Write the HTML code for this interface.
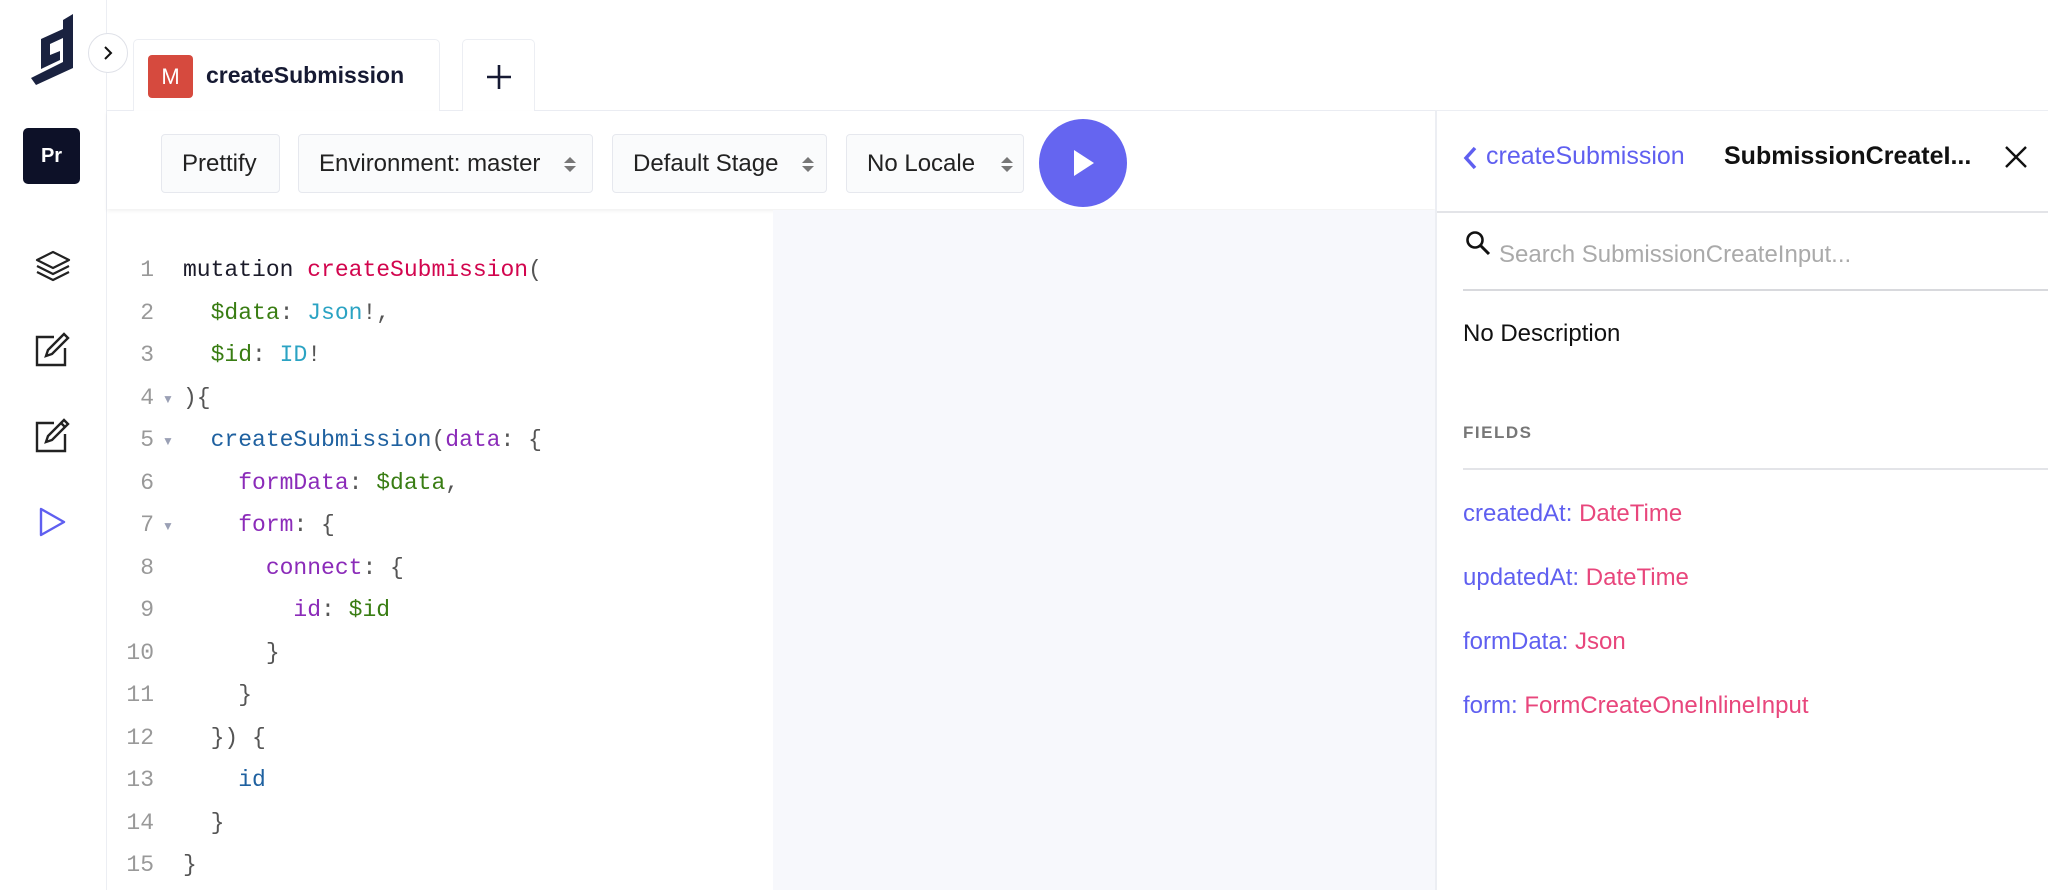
<!DOCTYPE html>
<html><head><meta charset="utf-8"><style>
*{box-sizing:border-box;margin:0;padding:0}
body{width:2048px;height:890px;overflow:hidden;background:#fff;font-family:"Liberation Sans",Arial,sans-serif;position:relative;color:#111}
.abs{position:absolute}
.side{left:0;top:0;width:107px;height:890px;border-right:1px solid #eceef3;background:#fff}
.btn{position:absolute;top:134px;height:59px;border:1px solid #e6e8ee;border-radius:4px;background:#fafbfc;font-size:24px;color:#222;display:flex;align-items:center;padding-left:20px}
.arr{position:absolute;right:20px;top:22px;width:0;height:0}
.arr:before{content:"";position:absolute;left:0;top:0;border-left:6px solid transparent;border-right:6px solid transparent;border-bottom:6px solid #777}
.arr:after{content:"";position:absolute;left:0;top:9px;border-left:6px solid transparent;border-right:6px solid transparent;border-top:6px solid #777}
.code{font-family:"Liberation Mono","DejaVu Sans Mono",monospace;font-size:23px;white-space:pre}
.ln{position:absolute;right:1894px;width:60px;text-align:right;color:#999}
.cl{position:absolute;left:183px;color:#555}
.k{color:#1b1b2a}.d{color:#d2054e}.v{color:#397d13}.t{color:#2ba3c3}.p{color:#8b2bb9}.f{color:#1f61a0}
.fold{position:absolute;left:162px;color:#9aa0b5;font-size:12px}
.rp{font-size:24px}
.fld{position:absolute;left:1463px;font-size:24px;color:#5f5ff0}
.fld span{color:#e8467c}
</style></head><body>
<div class="abs side"></div>
<!-- logo -->
<svg class="abs" style="left:0;top:0" width="90" height="95" viewBox="0 0 90 95">
<path d="M63 20 L73 14 L73 68 L36 85 L31 78 L63 62 Z" fill="#1a2240"/>
<path d="M41 39 L63 29 L63 38 L50 44 L50 55 L60 51 L60 60 L41 69 Z" fill="#1a2240"/>
</svg>
<div class="abs" style="left:88px;top:33px;width:40px;height:40px;border-radius:50%;border:1px solid #dfe1e8;background:#fff"></div>
<svg class="abs" style="left:100px;top:45px" width="16" height="16" viewBox="0 0 16 16"><path d="M5 2 L11 8 L5 14" stroke="#111" stroke-width="2" fill="none"/></svg>
<div class="abs" style="left:23px;top:128px;width:57px;height:56px;border-radius:5px;background:#0d1128;color:#fff;font-weight:bold;font-size:20px;display:flex;align-items:center;justify-content:center">Pr</div>
<!-- side icons -->
<svg class="abs" style="left:33px;top:248px" width="40" height="36" viewBox="0 0 40 36"><g fill="none" stroke="#222" stroke-width="2.2" stroke-linejoin="round"><path d="M20 4 L36 12 L20 20 L4 12 Z"/><path d="M4 18 L20 26 L36 18"/><path d="M4 24 L20 32 L36 24"/></g></svg>
<svg class="abs" style="left:34px;top:332px" width="36" height="36" viewBox="0 0 36 36"><g fill="none" stroke="#222" stroke-width="2.4"><path d="M20 5 H3 V33 H31 V16"/><path d="M30 2 L34 6 L18 22 L12 24 L14 18 Z"/></g></svg>
<svg class="abs" style="left:34px;top:418px" width="36" height="36" viewBox="0 0 36 36"><g fill="none" stroke="#222" stroke-width="2.4"><path d="M20 5 H3 V33 H31 V16"/><path d="M30 2 L34 6 L18 22 L12 24 L14 18 Z"/><path d="M27 5 L31 9"/></g></svg>
<svg class="abs" style="left:38px;top:506px" width="30" height="32" viewBox="0 0 30 32"><path d="M3 3 L26 16 L3 29 Z" fill="none" stroke="#5f5ff0" stroke-width="2.4" stroke-linejoin="round"/></svg>
<!-- tabs -->
<div class="abs" style="left:107px;top:110px;width:1941px;height:1px;background:#eceef3"></div>
<div class="abs" style="left:133px;top:39px;width:307px;height:73px;border:1px solid #eceef3;border-bottom:none;border-radius:5px 5px 0 0;background:#fff"></div>
<div class="abs" style="left:148px;top:55px;width:45px;height:43px;border-radius:4px;background:#d64a3e;color:#fff;font-size:22px;display:flex;align-items:center;justify-content:center">M</div>
<div class="abs" style="left:206px;top:62px;font-size:23px;font-weight:bold;color:#161a33">createSubmission</div>
<div class="abs" style="left:462px;top:39px;width:73px;height:72px;border:1px solid #eceef3;border-bottom:none;border-radius:5px 5px 0 0;background:#fff"></div>
<svg class="abs" style="left:485px;top:63px" width="28" height="28" viewBox="0 0 28 28"><path d="M14 2 V26 M2 14 H26" stroke="#161a33" stroke-width="2.6"/></svg>
<!-- toolbar -->
<div class="abs" style="left:107px;top:111px;width:1329px;height:98px;background:#fff;box-shadow:0 2px 4px rgba(0,0,0,0.06)"></div>
<div class="btn" style="left:161px;width:119px">Prettify</div>
<div class="btn" style="left:298px;width:295px">Environment: master<div class="arr" style="right:28px"></div></div>
<div class="btn" style="left:612px;width:215px">Default Stage<div class="arr" style="right:24px"></div></div>
<div class="btn" style="left:846px;width:178px">No Locale<div class="arr" style="right:22px"></div></div>
<div class="abs" style="left:1039px;top:119px;width:88px;height:88px;border-radius:50%;background:#6565f0"></div>
<svg class="abs" style="left:1072px;top:148px" width="24" height="30" viewBox="0 0 24 30"><path d="M2 2 L22 15 L2 28 Z" fill="#fff"/></svg>
<!-- editor -->
<div class="abs" style="left:773px;top:210px;width:662px;height:680px;background:#f7f8fc"></div>
<div class="code">
<div class="ln" style="top:257px">1</div><div class="cl" style="top:257px"><span class="k">mutation</span> <span class="d">createSubmission</span>(</div>
<div class="ln" style="top:300px">2</div><div class="cl" style="top:300px">  <span class="v">$data</span>: <span class="t">Json</span>!,</div>
<div class="ln" style="top:342px">3</div><div class="cl" style="top:342px">  <span class="v">$id</span>: <span class="t">ID</span>!</div>
<div class="ln" style="top:385px">4</div><div class="cl" style="top:385px">){</div>
<div class="ln" style="top:427px">5</div><div class="cl" style="top:427px">  <span class="f">createSubmission</span>(<span class="p">data</span>: {</div>
<div class="ln" style="top:470px">6</div><div class="cl" style="top:470px">    <span class="p">formData</span>: <span class="v">$data</span>,</div>
<div class="ln" style="top:512px">7</div><div class="cl" style="top:512px">    <span class="p">form</span>: {</div>
<div class="ln" style="top:555px">8</div><div class="cl" style="top:555px">      <span class="p">connect</span>: {</div>
<div class="ln" style="top:597px">9</div><div class="cl" style="top:597px">        <span class="p">id</span>: <span class="v">$id</span></div>
<div class="ln" style="top:640px">10</div><div class="cl" style="top:640px">      }</div>
<div class="ln" style="top:682px">11</div><div class="cl" style="top:682px">    }</div>
<div class="ln" style="top:725px">12</div><div class="cl" style="top:725px">  }) {</div>
<div class="ln" style="top:767px">13</div><div class="cl" style="top:767px">    <span class="f">id</span></div>
<div class="ln" style="top:810px">14</div><div class="cl" style="top:810px">  }</div>
<div class="ln" style="top:852px">15</div><div class="cl" style="top:852px">}</div>
</div>
<div class="fold" style="top:392px">▼</div><div class="fold" style="top:434px">▼</div><div class="fold" style="top:519px">▼</div>
<!-- right panel -->
<div class="abs" style="left:1435px;top:111px;width:613px;height:779px;border-left:2px solid #eceef3;background:#fff"></div>
<svg class="abs" style="left:1462px;top:145px" width="16" height="26" viewBox="0 0 16 26"><path d="M13 3 L4 13 L13 23" stroke="#5f5ff0" stroke-width="3.5" fill="none"/></svg>
<div class="abs" style="left:1486px;top:142px;color:#5f5ff0;font-size:25px">createSubmission</div>
<div class="abs" style="left:1724px;top:142px;font-weight:bold;color:#111;font-size:25px">SubmissionCreateI...</div>
<svg class="abs" style="left:2004px;top:145px" width="24" height="24" viewBox="0 0 24 24"><path d="M2 2 L22 22 M22 2 L2 22" stroke="#111" stroke-width="2.4"/></svg>
<div class="abs" style="left:1437px;top:211px;width:611px;height:2px;background:#e3e4e8"></div>
<svg class="abs" style="left:1465px;top:230px" width="26" height="26" viewBox="0 0 26 26"><circle cx="10" cy="10" r="7.5" stroke="#111" stroke-width="2.6" fill="none"/><path d="M15.5 15.5 L24 24" stroke="#111" stroke-width="3"/></svg>
<div class="abs rp" style="left:1499px;top:241px;color:#aaa">Search SubmissionCreateInput...</div>
<div class="abs" style="left:1463px;top:289px;width:585px;height:2px;background:#d8d9dd"></div>
<div class="abs rp" style="left:1463px;top:320px;color:#111">No Description</div>
<div class="abs" style="left:1463px;top:423px;font-size:17px;font-weight:bold;letter-spacing:1.5px;color:#777">FIELDS</div>
<div class="abs" style="left:1463px;top:468px;width:585px;height:2px;background:#e3e4e8"></div>
<div class="fld" style="top:500px">createdAt: <span>DateTime</span></div>
<div class="fld" style="top:564px">updatedAt: <span>DateTime</span></div>
<div class="fld" style="top:628px">formData: <span>Json</span></div>
<div class="fld" style="top:692px">form: <span>FormCreateOneInlineInput</span></div>
</body></html>
